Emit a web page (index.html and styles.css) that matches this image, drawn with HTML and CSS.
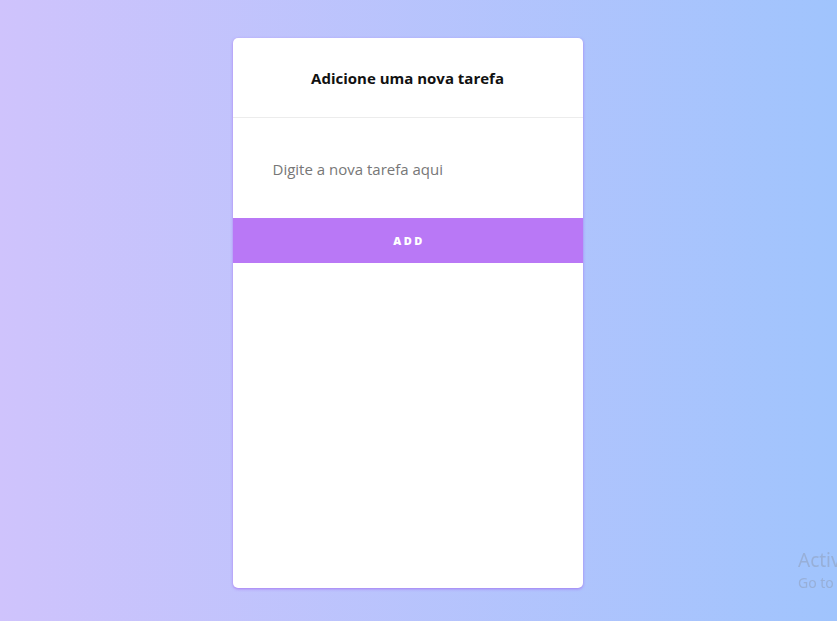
FILE: index.html
```html
<!DOCTYPE html>
<html lang="pt">
<head>
<meta charset="utf-8">
<title>Tarefas</title>
<link rel="stylesheet" href="styles.css">
</head>
<body>
<main class="page">
  <section class="card">
    <header class="card-header">
      <h1 class="card-title">Adicione uma nova tarefa</h1>
    </header>
    <div class="card-body">
      <input class="task-input" type="text" placeholder="Digite a nova tarefa aqui">
    </div>
    <button class="add-btn" type="button">ADD</button>
    <ul class="task-list"></ul>
  </section>
</main>
<div class="watermark">
  <div class="wm-title">Activate Windows</div>
  <div class="wm-sub">Go to Settings to activate Windows.</div>
</div>
</body>
</html>
```
FILE: styles.css
```css
* { box-sizing: border-box; }
html, body { margin: 0; padding: 0; height: 100%; }
body {
  font-family: "Open Sans", "Noto Sans", sans-serif;
  background: linear-gradient(to right, #cfc3fc 0%, #a0c4fd 100%);
  overflow: hidden;
}
.page {
  display: flex;
  justify-content: center;
  padding: 38px 22px 0 0;
}
.card {
  width: 350px;
  height: 550px;
  background: #fff;
  border-radius: 5px;
  box-shadow: 0 1px 3px rgba(160, 100, 240, 0.75);
  display: flex;
  flex-direction: column;
  overflow: hidden;
}
.card-header {
  height: 80px;
  border-bottom: 1px solid #ececec;
  display: flex;
  align-items: center;
  justify-content: center;
  padding-top: 1px;
}
.card-title {
  margin: 0;
  font-size: 15px;
  font-weight: 700;
  color: #111;
}
.card-body {
  height: 100px;
  display: flex;
  align-items: center;
  padding: 2px 40px 0;
}
.task-input {
  border: none;
  outline: none;
  width: 100%;
  font-family: inherit;
  font-size: 15px;
  color: #333;
  padding: 0;
  background: transparent;
}
.task-input::placeholder { color: #777; }
.add-btn {
  height: 45px;
  border: none;
  background: #b978f6;
  color: #fff;
  font-family: inherit;
  font-weight: 800;
  font-size: 11px;
  letter-spacing: 2.5px;
  padding: 0 0 0 3px;
  cursor: pointer;
}
.task-list { margin: 0; padding: 0; list-style: none; flex: 1; }
.watermark {
  position: fixed;
  left: 798px;
  top: 547px;
  color: rgba(140, 150, 170, 0.45);
  white-space: nowrap;
  font-family: "Noto Sans", "Open Sans", sans-serif;
}
.wm-title { font-size: 19px; line-height: 26px; }
.wm-sub { font-size: 14px; line-height: 20px; }
```
